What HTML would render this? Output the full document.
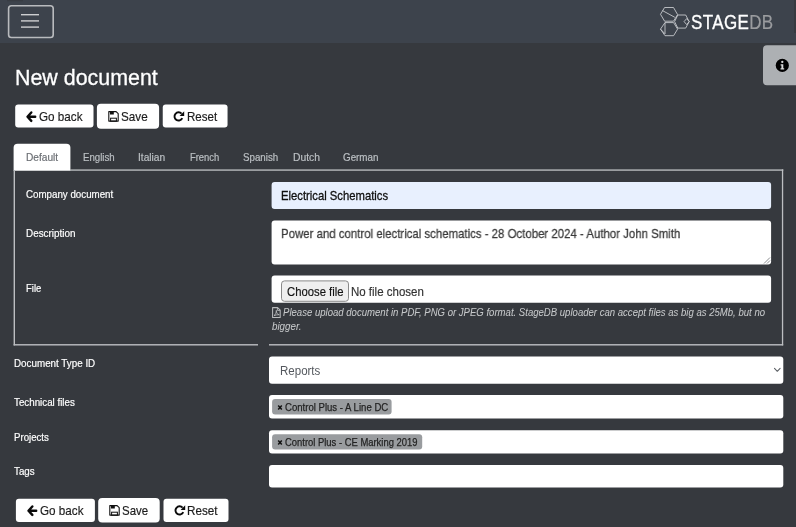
<!DOCTYPE html>
<html lang="en">
<head>
<meta charset="utf-8">
<title>New document - StageDB</title>
<style>
html,body{margin:0;padding:0;}
body{width:796px;height:527px;overflow:hidden;background:#36393e;position:relative;font-family:"Liberation Sans",sans-serif;}
.abs{position:absolute;box-sizing:border-box;}
.t{position:absolute;white-space:nowrap;line-height:1;transform-origin:0 0;font-family:"Liberation Sans",sans-serif;}
.btn{background:#ffffff;border-radius:3px;}
.white{background:#ffffff;border-radius:3px;}
.tag{background:#999c9f;border-radius:3px;}
.line{background:#bcbec1;}
</style>
</head>
<body>
<div id="layer" style="position:absolute;left:0;top:0;width:796px;height:527px;will-change:transform;">
<!-- boxes -->
<svg class="abs" style="left:0;top:0" width="796" height="527" viewBox="0 0 796 527">
<rect x="0" y="0" width="796" height="43" fill="#3d434c"/>
<rect x="794" y="0" width="2" height="33" fill="#373a40"/>
<rect x="7" y="0" width="16" height="1.2" fill="#383c43"/>
<path d="M767 45.250h30v39.950h-30a4 4 0 0 1-4-4v-31.950a4 4 0 0 1 4-4z" fill="#adb0b3"/>
<rect x="15.2" y="104.500" width="78.300" height="23" rx="3" fill="#ffffff"/>
<rect x="96.900" y="103.800" width="62.200" height="24.900" rx="4" fill="#ffffff"/>
<rect x="162.750" y="104.500" width="64.800" height="23.100" rx="3" fill="#ffffff"/>
<path d="M13.6 170.7v-23.0a4 4 0 0 1 4-4h48.8a4 4 0 0 1 4 4v23.0z" fill="#ffffff"/>
<rect x="70" y="169.4" width="713.3" height="1.35" fill="#bcbec1"/>
<rect x="13.6" y="170" width="1.4" height="175.4" fill="#bcbec1"/>
<rect x="781.9" y="169.4" width="1.3" height="176" fill="#bcbec1"/>
<rect x="13.6" y="344.1" width="244.4" height="1.4" fill="#bcbec1"/>
<rect x="269" y="344.1" width="514.2" height="1.4" fill="#bcbec1"/>
<rect x="271.6" y="182.1" width="499.5" height="26.8" rx="3" fill="#e8f0fe"/>
<rect x="271.6" y="220.400" width="499.5" height="44" rx="3" fill="#ffffff"/>
<rect x="271.6" y="275.5" width="499.5" height="27.2" rx="3" fill="#ffffff"/>
<rect x="281.5" y="280.9" width="67" height="20.4" rx="3" fill="#efefef" stroke="#8a8a8a" stroke-width="1"/>
<rect x="269" y="356.4" width="514.3" height="27.4" rx="3" fill="#ffffff"/>
<rect x="269" y="395" width="514.3" height="23.4" rx="3" fill="#ffffff"/>
<rect x="269" y="430.2" width="514.3" height="23.3" rx="3" fill="#ffffff"/>
<rect x="269" y="464.9" width="514.3" height="22.7" rx="3" fill="#ffffff"/>
<rect x="272.1" y="399.1" width="119.5" height="15.5" rx="3" fill="#999c9f"/>
<rect x="272.1" y="434.3" width="150.1" height="15.3" rx="3" fill="#999c9f"/>
<rect x="15.9" y="498.8" width="79" height="23.3" rx="3" fill="#ffffff"/>
<rect x="98.2" y="498" width="61.5" height="24.6" rx="4" fill="#ffffff"/>
<rect x="163.5" y="498.8" width="65" height="23.3" rx="3" fill="#ffffff"/>
</svg>
<!-- navbar -->
<svg class="abs" style="left:0;top:0" width="60" height="43" viewBox="0 0 60 43"><rect x="8.6" y="5.800" width="44.600" height="31.700" rx="2.800" ry="2.800" fill="none" stroke="#b9bbbe" stroke-width="1.600"/><g fill="#cdced0"><rect x="21" y="14.000" width="18" height="1.400"/><rect x="21" y="20.200" width="18" height="1.400"/><rect x="21" y="26.400" width="18" height="1.400"/></g></svg>

<!-- logo -->
<svg class="abs" style="left:655px;top:0" width="141" height="43" viewBox="655 0 141 43">
  <g fill="none" stroke="#cdd0d3" stroke-width="0.85" stroke-linejoin="round">
    <polygon points="660.5,14.3 664.6,7.5 673.5,7.5 677.6,14.6 673.5,21.2 664.6,21.2"/>
    <line x1="662.5" y1="10.6" x2="674.8" y2="17.3"/>
    <polygon points="660.5,29.1 665,22.6 673.6,22.6 677.6,29.1 673.6,35.7 665,35.7"/>
    <line x1="665" y1="22.6" x2="665" y2="33.8"/>
    <line x1="660.5" y1="29.1" x2="665" y2="33.8"/>
    <polygon points="674.6,21.6 677.8,15 685.7,15 689.2,21.6 685.7,28.1 677.8,28.1"/>
    <polygon points="684.1,21.6 686.7,18.6 689.2,21.6 686.7,24.6"/>
  </g>
</svg>
<span class="t" style="left:691.2px;top:12.6px;font-size:19.5px;color:#ffffff;transform:scaleX(0.87);letter-spacing:0.45px;-webkit-text-stroke:0.32px #ffffff">STAGE<span style="color:#9a9c9f;-webkit-text-stroke:0.2px #9a9c9f">DB</span></span>

<!-- info tab -->
<svg class="abs" style="left:775px;top:58px" width="15" height="15" viewBox="0 0 15 15">
  <circle cx="7.3" cy="7.4" r="7.100" fill="#b7b9bc"/><circle cx="7.3" cy="7.4" r="6.6" fill="#000"/>
  <circle cx="7.3" cy="3.9" r="1.15" fill="#d8d9da"/>
  <path d="M5.6 6.2h2.7v4h0.9v1.3H5.5v-1.3h0.9V7.5H5.6z" fill="#d8d9da"/>
</svg>

<!-- top buttons -->
<svg class="abs" style="left:24px;top:109px" width="16" height="16" viewBox="24 109 16 16"><path d="M35.2 116.7H28M31.3 112.5l-3.800 4.200l3.800 4.200" fill="none" stroke="#0a0a0a" stroke-width="2.4" stroke-linecap="round" stroke-linejoin="round"/></svg>
<svg class="abs" style="left:106px;top:109px" width="16" height="16" viewBox="106 109 16 16"><path d="M108.8 111.6h7.3l2.1 2.1v7.4h-9.4z" fill="none" stroke="#111" stroke-width="1.1" stroke-linejoin="round"/><rect x="110" y="111.6" width="3.8" height="2.9" fill="#111"/><rect x="110.6" y="118.2" width="5.8" height="3" fill="none" stroke="#111" stroke-width="1"/></svg>
<svg class="abs" style="left:169.6px;top:109px" width="18" height="16" viewBox="170 109 18 16"><path d="M181.6 113.6A4.1 4.1 0 1 0 182.3 118.2" fill="none" stroke="#0a0a0a" stroke-width="1.9" stroke-linecap="butt"/><path d="M184.2 111.3v4.6h-4.6z" fill="#0a0a0a"/></svg>

<!-- tabs -->
<!-- panel border -->

<!-- inputs in panel -->

<!-- select + multiselects -->

<!-- bottom buttons -->
<svg class="abs" style="left:24.9px;top:502.9px" width="16" height="16" viewBox="24 109 16 16"><path d="M35.2 116.7H28M31.3 112.5l-3.800 4.200l3.800 4.200" fill="none" stroke="#0a0a0a" stroke-width="2.4" stroke-linecap="round" stroke-linejoin="round"/></svg>
<svg class="abs" style="left:106.9px;top:502.9px" width="16" height="16" viewBox="106 109 16 16"><path d="M108.8 111.6h7.3l2.1 2.1v7.4h-9.4z" fill="none" stroke="#111" stroke-width="1.1" stroke-linejoin="round"/><rect x="110" y="111.6" width="3.8" height="2.9" fill="#111"/><rect x="110.6" y="118.2" width="5.8" height="3" fill="none" stroke="#111" stroke-width="1"/></svg>
<svg class="abs" style="left:170.6px;top:502.9px" width="18" height="16" viewBox="170 109 18 16"><path d="M181.6 113.6A4.1 4.1 0 1 0 182.3 118.2" fill="none" stroke="#0a0a0a" stroke-width="1.9" stroke-linecap="butt"/><path d="M184.2 111.3v4.6h-4.6z" fill="#0a0a0a"/></svg>


<!-- small icons -->
<svg class="abs" style="left:270.6px;top:306.1px" width="11" height="13" viewBox="271 306 11 13">
  <path d="M272.6 307.6h5l2.6 2.6v7.2h-7.6z" fill="none" stroke="#b9bbbd" stroke-width="1.05" stroke-linejoin="round"/>
  <path d="M277.4 307.8v2.6h2.6" fill="none" stroke="#b9bbbd" stroke-width="0.9"/>
  <path d="M274 315.6c1.6-1 2.4-3 2.3-5.2c0 2.4 1.2 4 2.9 4.3c-1.9-0.1-3.6 0.3-5.200 0.900z" fill="none" stroke="#b9bbbd" stroke-width="0.9" stroke-linejoin="round"/>
</svg>
<svg class="abs" style="left:772px;top:365px" width="11" height="10" viewBox="772 365 11 10">
  <path d="M774.500 368.400l2.800 2.900l2.800-2.900" fill="none" stroke="#5a5e63" stroke-width="1.050" stroke-linecap="round" stroke-linejoin="round"/>
</svg>
<svg class="abs" style="left:762px;top:256px" width="9" height="9" viewBox="762 256 9 9">
  <path d="M764 263.500l6-6M767 263.500l3-3" fill="none" stroke="#7d7f82" stroke-width="0.9"/>
</svg>
<svg class="abs" style="left:276px;top:403px" width="8" height="8" viewBox="276 403 8 8"><path d="M278.200 405.600l3.600 3.900M281.800 405.600l-3.600 3.900" stroke="#111" stroke-width="1.5" fill="none"/></svg>
<svg class="abs" style="left:276px;top:438px" width="8" height="8" viewBox="276 438 8 8"><path d="M278.200 440.500l3.600 3.900M281.800 440.500l-3.600 3.900" stroke="#111" stroke-width="1.5" fill="none"/></svg>

<span class="t" style="left:14.76px;top:67.00px;font-size:22px;color:#ffffff;transform:scaleX(0.9728);-webkit-text-stroke:0.3px #ffffff;">New document</span>
<span class="t" style="left:39.28px;top:110.00px;font-size:13px;color:#1c1c1c;transform:scaleX(0.8989);-webkit-text-stroke:0.18px #1c1c1c;">Go back</span>
<span class="t" style="left:121.21px;top:110.00px;font-size:13px;color:#1c1c1c;transform:scaleX(0.8987);-webkit-text-stroke:0.18px #1c1c1c;">Save</span>
<span class="t" style="left:187.01px;top:110.00px;font-size:13px;color:#1c1c1c;transform:scaleX(0.8864);-webkit-text-stroke:0.18px #1c1c1c;">Reset</span>
<span class="t" style="left:25.88px;top:152.00px;font-size:11px;color:#6a6e73;transform:scaleX(0.9225);-webkit-text-stroke:0.18px #6a6e73;">Default</span>
<span class="t" style="left:82.71px;top:152.00px;font-size:11px;color:#bcc0c4;transform:scaleX(0.8772);-webkit-text-stroke:0.18px #bcc0c4;">English</span>
<span class="t" style="left:138.09px;top:152.00px;font-size:11px;color:#bcc0c4;transform:scaleX(0.9268);-webkit-text-stroke:0.18px #bcc0c4;">Italian</span>
<span class="t" style="left:189.53px;top:152.00px;font-size:11px;color:#bcc0c4;transform:scaleX(0.8547);-webkit-text-stroke:0.18px #bcc0c4;">French</span>
<span class="t" style="left:242.66px;top:152.00px;font-size:11px;color:#bcc0c4;transform:scaleX(0.8854);-webkit-text-stroke:0.18px #bcc0c4;">Spanish</span>
<span class="t" style="left:292.57px;top:152.00px;font-size:11px;color:#bcc0c4;transform:scaleX(0.9391);-webkit-text-stroke:0.18px #bcc0c4;">Dutch</span>
<span class="t" style="left:343.00px;top:152.00px;font-size:11px;color:#bcc0c4;transform:scaleX(0.8913);-webkit-text-stroke:0.18px #bcc0c4;">German</span>
<span class="t" style="left:26.31px;top:189.00px;font-size:11.5px;color:#ffffff;transform:scaleX(0.8476);-webkit-text-stroke:0.2px #ffffff;">Company document</span>
<span class="t" style="left:25.90px;top:228.00px;font-size:11.5px;color:#ffffff;transform:scaleX(0.8589);-webkit-text-stroke:0.2px #ffffff;">Description</span>
<span class="t" style="left:25.93px;top:283.00px;font-size:11.5px;color:#ffffff;transform:scaleX(0.8226);-webkit-text-stroke:0.2px #ffffff;">File</span>
<span class="t" style="left:13.71px;top:358.00px;font-size:11.5px;color:#ffffff;transform:scaleX(0.8546);-webkit-text-stroke:0.2px #ffffff;">Document Type ID</span>
<span class="t" style="left:13.72px;top:397.00px;font-size:11.5px;color:#ffffff;transform:scaleX(0.8499);-webkit-text-stroke:0.2px #ffffff;">Technical files</span>
<span class="t" style="left:14.02px;top:432.00px;font-size:11.5px;color:#ffffff;transform:scaleX(0.8377);-webkit-text-stroke:0.2px #ffffff;">Projects</span>
<span class="t" style="left:13.72px;top:466.00px;font-size:11.5px;color:#ffffff;transform:scaleX(0.8515);-webkit-text-stroke:0.2px #ffffff;">Tags</span>
<span class="t" style="left:281.21px;top:189.00px;font-size:13px;color:#101010;transform:scaleX(0.8669);-webkit-text-stroke:0.3px #101010;">Electrical Schematics</span>
<span class="t" style="left:281.09px;top:227.00px;font-size:13px;color:#3a3a3a;transform:scaleX(0.8785);-webkit-text-stroke:0.28px #3a3a3a;">Power and control electrical schematics - 28 October 2024 - Author John Smith</span>
<span class="t" style="left:287.11px;top:285.00px;font-size:13px;color:#141414;transform:scaleX(0.8690);-webkit-text-stroke:0.18px #141414;">Choose file</span>
<span class="t" style="left:351.12px;top:285.00px;font-size:13px;color:#333333;transform:scaleX(0.8835);-webkit-text-stroke:0.18px #333333;">No file chosen</span>
<span class="t" style="left:283.21px;top:307.00px;font-size:11px;color:#c6c8ca;transform:scaleX(0.8695);font-style:italic;-webkit-text-stroke:0.05px #c6c8ca;">Please upload document in PDF, PNG or JPEG format. StageDB uploader can accept files as big as 25Mb, but no</span>
<span class="t" style="left:272.42px;top:321.00px;font-size:11px;color:#c6c8ca;transform:scaleX(0.8873);font-style:italic;-webkit-text-stroke:0.05px #c6c8ca;">bigger.</span>
<span class="t" style="left:279.98px;top:365.00px;font-size:12px;color:#54585e;transform:scaleX(0.9599);">Reports</span>
<span class="t" style="left:284.81px;top:402.00px;font-size:11px;color:#232323;transform:scaleX(0.8701);-webkit-text-stroke:0.25px #232323;">Control Plus - A Line DC</span>
<span class="t" style="left:284.81px;top:437.00px;font-size:11px;color:#232323;transform:scaleX(0.8565);-webkit-text-stroke:0.25px #232323;">Control Plus - CE Marking 2019</span>
<span class="t" style="left:40.08px;top:504.00px;font-size:13px;color:#1c1c1c;transform:scaleX(0.8989);-webkit-text-stroke:0.18px #1c1c1c;">Go back</span>
<span class="t" style="left:122.22px;top:504.00px;font-size:13px;color:#1c1c1c;transform:scaleX(0.8811);-webkit-text-stroke:0.18px #1c1c1c;">Save</span>
<span class="t" style="left:186.80px;top:504.00px;font-size:13px;color:#1c1c1c;transform:scaleX(0.8984);-webkit-text-stroke:0.18px #1c1c1c;">Reset</span>
</div>
</body>
</html>
